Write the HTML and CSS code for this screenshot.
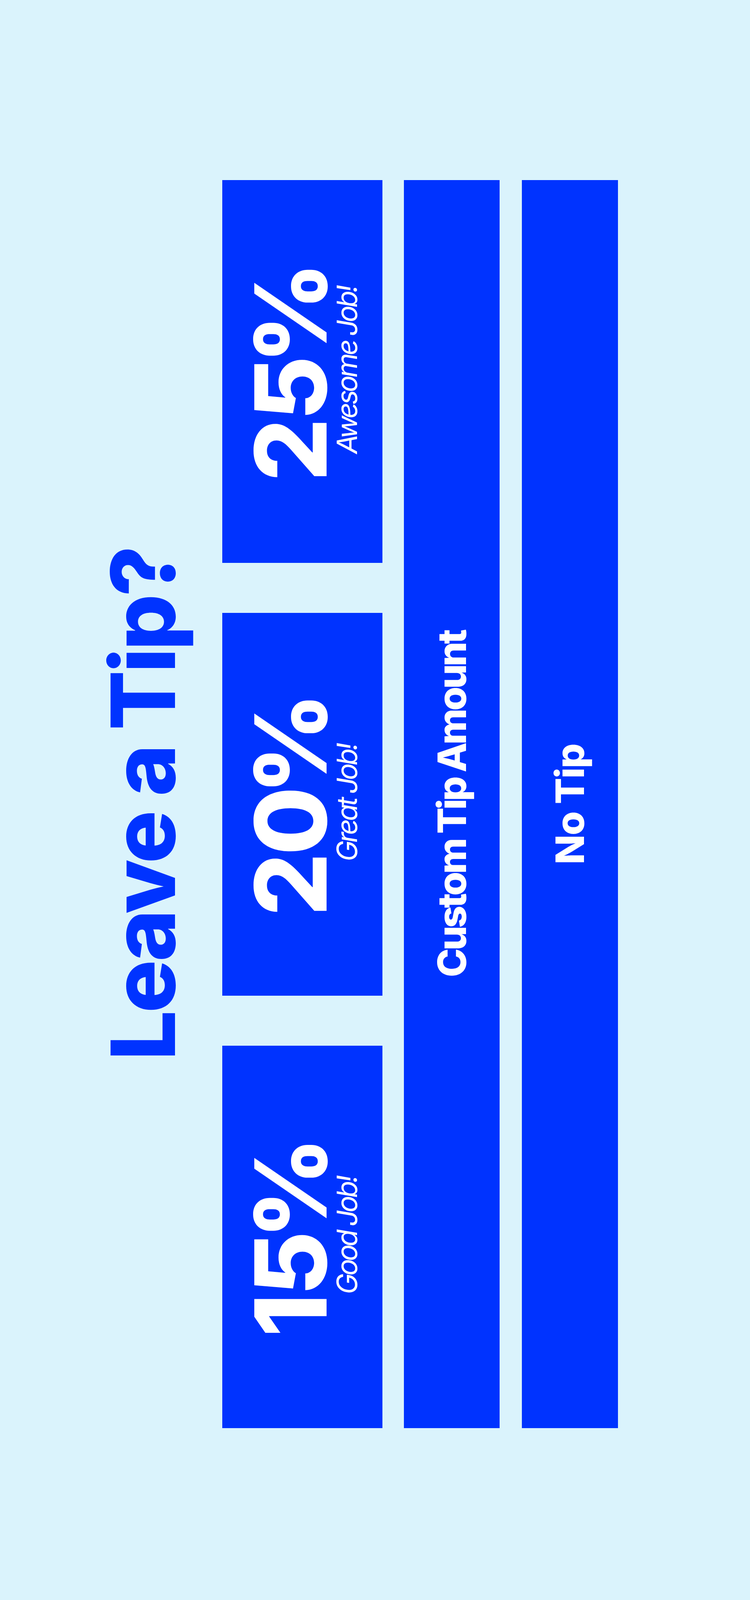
FILE: index.html
```html
<!DOCTYPE html>
<html lang="en">
<head>
<meta charset="utf-8">
<title>Leave a Tip?</title>
<link rel="stylesheet" href="styles.css">
</head>
<body>
<div class="page">
  <main class="stage">
    <h1 class="title">Leave a Tip?</h1>
    <section class="tiles">
      <button class="tile">
        <span class="pct">15<span class="sign">%</span></span>
        <span class="sub">Good Job!</span>
      </button>
      <button class="tile">
        <span class="pct">20<span class="sign">%</span></span>
        <span class="sub">Great Job!</span>
      </button>
      <button class="tile">
        <span class="pct">25<span class="sign">%</span></span>
        <span class="sub">Awesome Job!</span>
      </button>
    </section>
    <button class="wide custom">Custom Tip Amount</button>
    <button class="wide notip">No Tip</button>
  </main>
</div>
</body>
</html>
```

FILE: styles.css
```css
html, body {
  margin: 0;
  padding: 0;
  background: #daf3fc;
  overflow: hidden;
}

.page {
  width: 1920px;
  height: 4118px;
  overflow: hidden;
  position: relative;
  background: #daf3fc;
}

.stage {
  width: 4118px;
  height: 1920px;
  box-sizing: border-box;
  padding-top: 252px;
  display: flex;
  flex-direction: column;
  align-items: center;
  transform-origin: 0 0;
  transform: rotate(-90deg) translateX(-100%);
  font-family: Inter, "Noto Sans", "Liberation Sans", sans-serif;
  color: #0033ff;
}

.title {
  margin: 0;
  font-size: 227px;
  line-height: 227px;
  font-weight: 800;
  letter-spacing: -7px;
  color: #0033ff;
}

.tiles {
  margin-top: 90px;
  width: 3195px;
  height: 410px;
  display: flex;
  gap: 128px;
}

button {
  font-family: inherit;
  border: 0;
  padding: 0;
  margin: 0;
  cursor: pointer;
  background: #0033ff;
  color: #ffffff;
}

.tile {
  flex: 1 1 0;
  height: 410px;
  display: flex;
  flex-direction: column;
  align-items: center;
  justify-content: center;
}

.pct {
  display: block;
  font-size: 254px;
  line-height: 226px;
  font-weight: 800;
  font-variant-numeric: proportional-nums;
  letter-spacing: -6px;
}

.sign {
  margin-left: -14px;
  letter-spacing: 0;
}

.sub {
  display: block;
  font-size: 72px;
  line-height: 61px;
  font-weight: 400;
  font-style: italic;
  letter-spacing: -6px;
  margin-right: -6px;
}

.wide {
  width: 3195px;
  font-size: 100px;
  font-weight: 800;
  line-height: 1;
}

.custom {
  margin-top: 55px;
  height: 245px;
  letter-spacing: -6px;
}

.notip {
  margin-top: 57px;
  height: 246px;
  letter-spacing: -2px;
}
```
